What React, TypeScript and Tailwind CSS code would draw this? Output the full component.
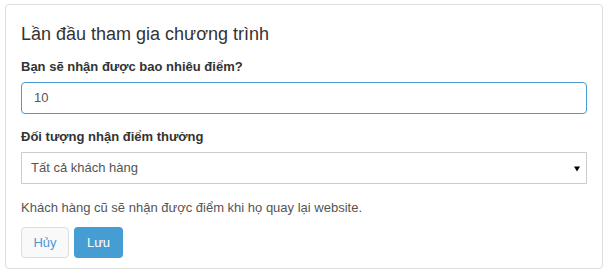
import React from "react";

export default function App() {
  return (
    <div className="w-[610px] h-[275px] bg-white pt-[4px] pl-[5px]" style={{ fontFamily: '"Liberation Sans", Arial, sans-serif' }}>
      <div className="w-[598px] h-[265px] border border-[#dddddd] rounded-[4px] px-[15px] pt-[16px]">
        <div className="text-[18px] leading-[26px] text-[#333333]">Lần đầu tham gia chương trình</div>
        <div className="mt-[11px] text-[13px] font-bold leading-[18px] text-[#333333]">Bạn sẽ nhận được bao nhiêu điểm?</div>
        <div className="mt-[6px] h-[32px] border border-[#4a9ad4] rounded-[4px] flex items-center pl-[12px] text-[13px] text-[#555555]">10</div>
        <div className="mt-[14px] text-[13px] font-bold leading-[18px] text-[#333333]">Đối tượng nhận điểm thưởng</div>
        <div className="mt-[6px] h-[32px] border border-[#cccccc] flex items-center justify-between pl-[9px] pr-[6px] text-[13px] text-[#555555]">
          <span>Tất cả khách hàng</span>
          <svg width="6" height="6" viewBox="0 0 6 6" className="mt-[1px]">
            <polygon points="0,0.5 6,0.5 3,5.5" fill="#000000" />
          </svg>
        </div>
        <div className="mt-[15px] text-[13px] leading-[18px] text-[#555555]">Khách hàng cũ sẽ nhận được điểm khi họ quay lại website.</div>
        <div className="mt-[10px] flex gap-[5px]">
          <button className="w-[48px] h-[31px] border border-[#dddddd] rounded-[4px] bg-[#f9f9f9] text-[13px] text-[#4a9ad4]">Hủy</button>
          <button className="w-[49px] h-[31px] rounded-[4px] bg-[#459dd3] text-[13px] text-white">Lưu</button>
        </div>
      </div>
    </div>
  );
}
